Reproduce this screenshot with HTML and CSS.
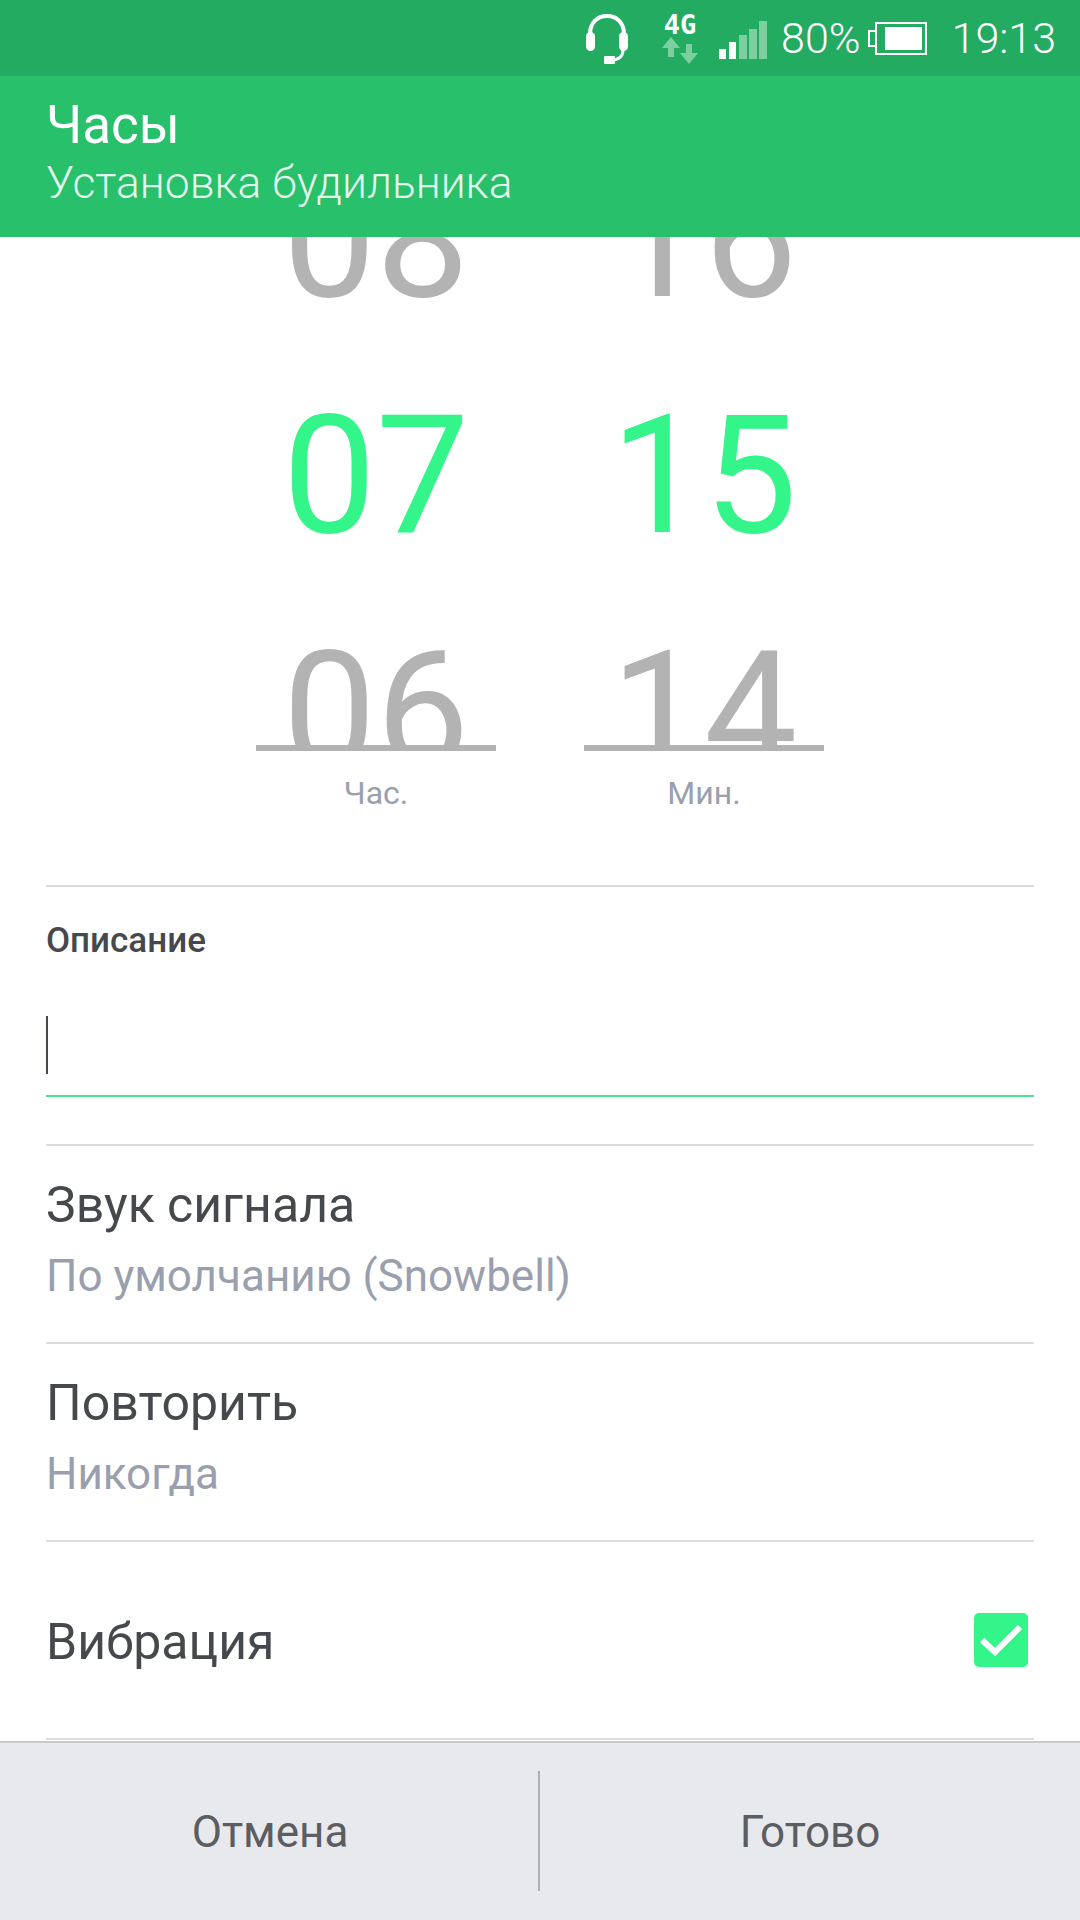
FILE: index.html
```html
<!DOCTYPE html>
<html lang="ru">
<head>
    <meta charset="UTF-8">
    <title>Установка будильника</title>
    <link rel="stylesheet" href="styles.css">
</head>
<body>
    <div class="screen">
        <div class="status-bar">
            <svg class="icon-headset" width="44" height="52" viewBox="0 0 44 52">
                <path d="M5 26V22C5 11 12 4 22 4S39 11 39 22V26" fill="none" stroke="#fff" stroke-width="4"/>
                <rect x="1" y="20" width="9" height="19" rx="4.5" fill="#fff"/>
                <rect x="34" y="20" width="9" height="19" rx="4.5" fill="#fff"/>
                <path d="M38 38C38 44 34 48 26 48" fill="none" stroke="#fff" stroke-width="3"/>
                <rect x="19" y="44" width="11" height="8" rx="1" fill="#fff"/>
            </svg>
            <div class="network">
                <span class="network-label">4G</span>
                <svg width="38" height="27" viewBox="0 0 38 27">
                    <path d="M10 0L19 11H13V20H7V11H1Z" fill="#7dcf9f"/>
                    <path d="M25 7H31V16H37L28 27L19 16H25Z" fill="#7dcf9f"/>
                </svg>
            </div>
            <svg class="icon-signal" width="48" height="38" viewBox="0 0 48 38">
                <rect x="0" y="28" width="7" height="10" fill="#fff"/>
                <rect x="10" y="21" width="7" height="17" fill="#fff"/>
                <rect x="20" y="14" width="8" height="24" fill="#7dcf9f"/>
                <rect x="30" y="8" width="8" height="30" fill="#7dcf9f"/>
                <rect x="40" y="0" width="8" height="38" fill="#7dcf9f"/>
            </svg>
            <span class="battery-pct">80%</span>
            <svg class="icon-battery" width="59" height="33" viewBox="0 0 59 33">
                <path d="M8 9H1V24H8" fill="none" stroke="#fff" stroke-width="2"/>
                <rect x="8" y="1" width="50" height="31" fill="none" stroke="#fff" stroke-width="2"/>
                <rect x="17" y="5" width="37" height="23" fill="#fff"/>
            </svg>
            <span class="clock">19:13</span>
        </div>

        <header class="app-bar">
            <div class="app-title">Часы</div>
            <div class="app-subtitle">Установка будильника</div>
        </header>

        <main class="content">
            <section class="picker">
                <div class="picker-col">
                    <div class="wheel">
                        <div class="wheel-list">
                            <div class="wheel-item">08</div>
                            <div class="wheel-item active">07</div>
                            <div class="wheel-item">06</div>
                        </div>
                    </div>
                    <div class="picker-label">Час.</div>
                </div>
                <div class="picker-col">
                    <div class="wheel">
                        <div class="wheel-list">
                            <div class="wheel-item">16</div>
                            <div class="wheel-item active">15</div>
                            <div class="wheel-item">14</div>
                        </div>
                    </div>
                    <div class="picker-label">Мин.</div>
                </div>
            </section>

            <section class="row description">
                <div class="description-label">Описание</div>
                <div class="description-input"><span class="caret"></span></div>
            </section>

            <section class="row setting">
                <div class="setting-title">Звук сигнала</div>
                <div class="setting-value">По умолчанию (Snowbell)</div>
            </section>

            <section class="row setting">
                <div class="setting-title">Повторить</div>
                <div class="setting-value">Никогда</div>
            </section>

            <section class="row setting-check">
                <div class="setting-title">Вибрация</div>
                <svg class="checkbox" width="54" height="54" viewBox="0 0 54 54">
                    <rect width="54" height="54" rx="5" fill="#33f58a"/>
                    <path d="M8 27L21 39L46 14" fill="none" stroke="#fff" stroke-width="6"/>
                </svg>
            </section>
        </main>

        <footer class="action-bar">
            <div class="action">Отмена</div>
            <div class="action-divider"></div>
            <div class="action">Готово</div>
        </footer>
    </div>
</body>
</html>
```

FILE: styles.css
```css
* {
    margin: 0;
    padding: 0;
    box-sizing: border-box;
}

body {
    font-family: 'Roboto', sans-serif;
    background-color: #ffffff;
    color: #45484d;
}

.screen {
    width: 1080px;
    height: 1920px;
    display: flex;
    flex-direction: column;
    overflow: hidden;
}

/* Status bar */
.status-bar {
    height: 76px;
    background-color: #23ab62;
    color: #ffffff;
    display: flex;
    align-items: center;
    justify-content: flex-end;
    padding-right: 24px;
}

.icon-headset {
    margin-right: 32px;
}

.network {
    display: flex;
    flex-direction: column;
    align-items: center;
    margin-right: 20px;
    width: 38px;
}

.network-label {
    font-family: 'DejaVu Sans Mono', monospace;
    font-weight: 700;
    font-size: 27px;
    line-height: 24px;
}

.icon-signal {
    margin-right: 14px;
    margin-top: 4px;
}

.battery-pct {
    font-size: 43px;
    font-weight: 300;
    margin-right: 7px;
}

.icon-battery {
    margin-right: 25px;
}

.clock {
    font-size: 43px;
    font-weight: 300;
}

/* App bar */
.app-bar {
    height: 161px;
    background-color: #28c06b;
    color: #ffffff;
    padding: 19px 46px 0;
}

.app-title {
    font-size: 53px;
    line-height: 60px;
}

.app-subtitle {
    font-size: 44.4px;
    font-weight: 300;
    line-height: 56px;
    color: rgba(255, 255, 255, 0.88);
}

/* Time picker */
.content {
    flex: 1;
    padding: 0 46px;
    overflow: hidden;
}

.picker {
    display: flex;
    gap: 88px;
    padding-left: 210px;
    height: 648px;
}

.picker-col {
    width: 240px;
}

.wheel {
    height: 514px;
    overflow: hidden;
    border-bottom: 6px solid #b3b3b3;
}

.wheel-list {
    margin-top: -115px;
}

.wheel-item {
    height: 236px;
    line-height: 236px;
    font-size: 166px;
    text-align: center;
    color: #b3b3b3;
}

.wheel-item.active {
    color: #33f58a;
}

.picker-label {
    font-size: 32px;
    line-height: 36px;
    margin-top: 24px;
    text-align: center;
    color: #9a9fae;
}

/* Rows */
.row {
    border-top: 2px solid #dcdcdc;
}

.description {
    height: 259px;
    padding-top: 36px;
}

.description-label {
    font-size: 35px;
    font-weight: 500;
    line-height: 36px;
}

.description-input {
    height: 112px;
    margin-top: 26px;
    padding-top: 31px;
    border-bottom: 2px solid #4fe295;
}

.caret {
    display: block;
    width: 2px;
    height: 58px;
    background-color: #45484d;
}

.setting {
    height: 198px;
    padding-top: 29px;
}

.setting-title {
    font-size: 50px;
    line-height: 60px;
}

.setting-value {
    font-size: 44px;
    line-height: 52px;
    margin-top: 15px;
    color: #9a9fae;
}

.setting-check {
    height: 200px;
    display: flex;
    align-items: center;
    justify-content: space-between;
    padding-right: 6px;
    border-bottom: 2px solid #dcdcdc;
}

.setting-check .setting-title {
    margin-top: 3px;
}

/* Bottom actions */
.action-bar {
    height: 179px;
    background-color: #e8e9ed;
    border-top: 2px solid #c9c9c9;
    display: flex;
    align-items: center;
}

.action {
    flex: 1;
    text-align: center;
    font-size: 44px;
    color: #5b5d62;
}

.action-divider {
    width: 2px;
    height: 120px;
    margin-left: -2px;
    margin-bottom: 2px;
    background-color: #aeb0b4;
}
```
